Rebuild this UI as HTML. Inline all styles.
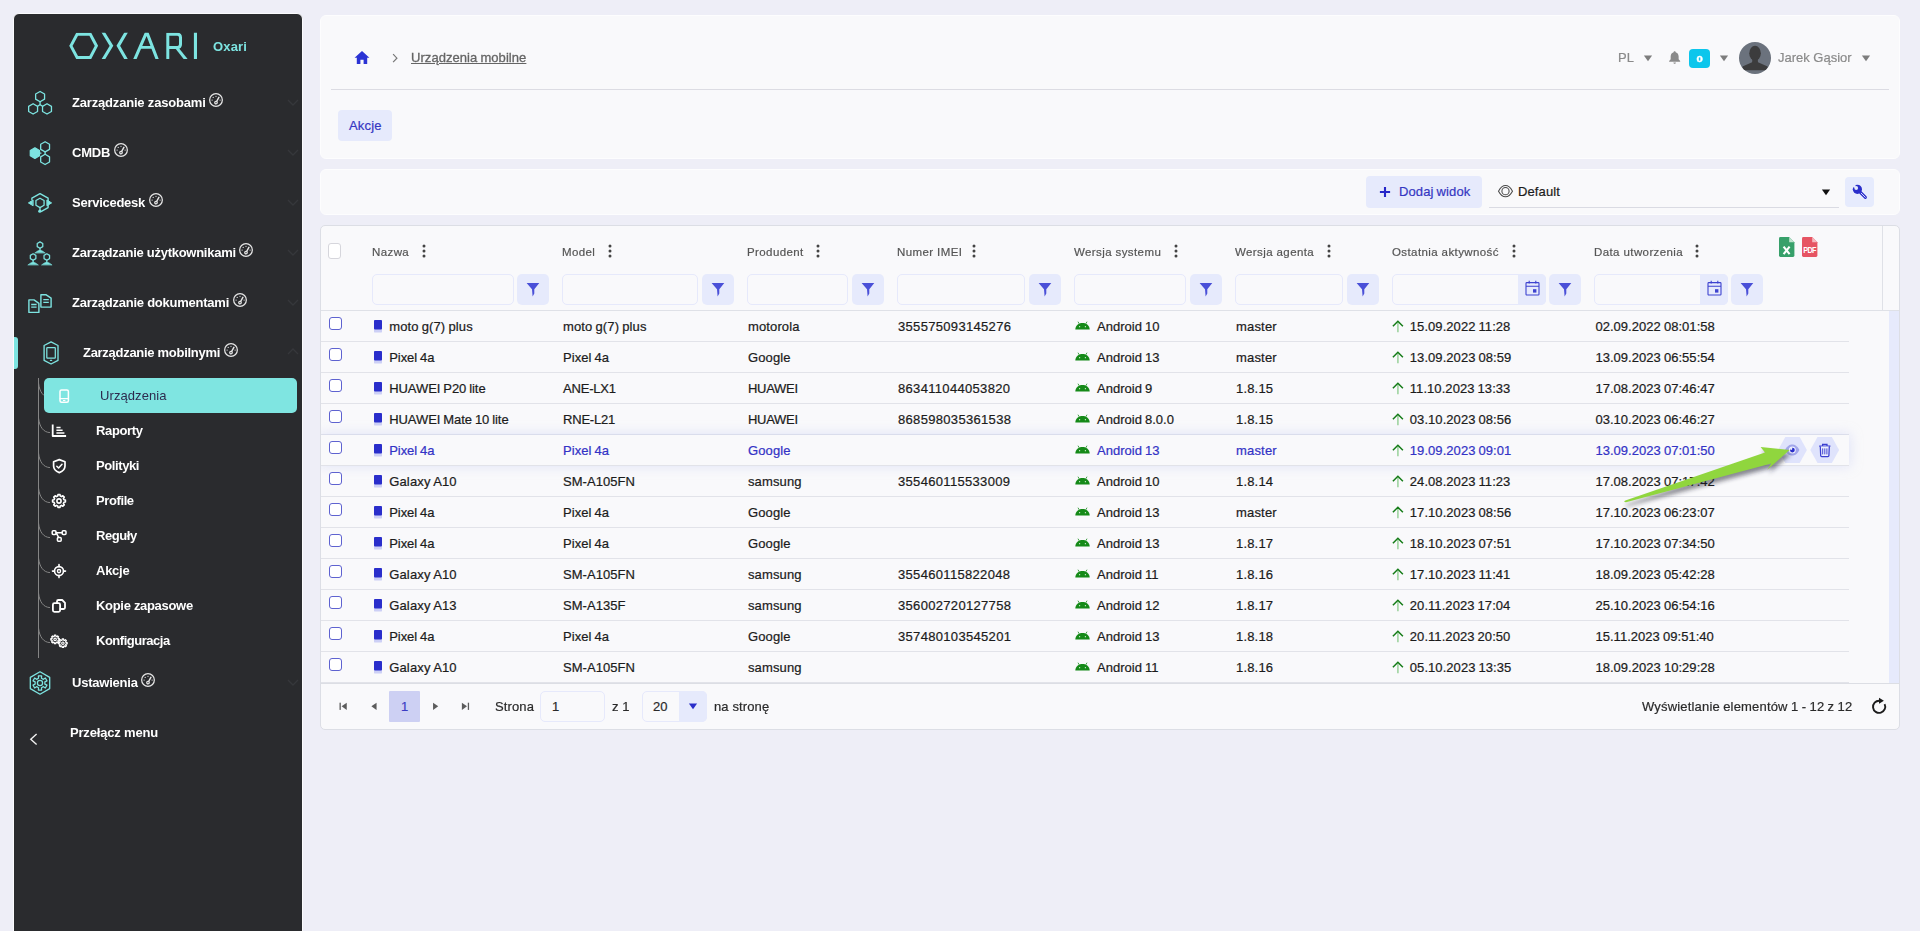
<!DOCTYPE html>
<html lang="pl">
<head>
<meta charset="utf-8">
<title>Urządzenia mobilne</title>
<style>
*{box-sizing:border-box;margin:0;padding:0}
html,body{width:1920px;height:931px;overflow:hidden}
body{background:#eeeef7;font-family:"Liberation Sans",sans-serif;font-size:13.5px;color:#1c1c1c;position:relative}
div,span,svg{position:absolute}
span{margin-top:1px}
svg{overflow:visible}
#side{left:13px;top:13px;width:290px;height:930px;background:#2a2b2e;border-radius:6px 6px 0 0;border:1px solid #fbfbfd}
.brand{left:213px;top:38px;font-weight:bold;font-size:13px;line-height:16px;color:#7de4e1;letter-spacing:0.15px}
.mt,.st,.brand,.hd,.g,.gs{will-change:transform}
.mt{font-weight:bold;font-size:13px;line-height:16px;color:#fff;letter-spacing:-0.3px;white-space:nowrap}
.st{font-weight:bold;font-size:13px;line-height:16px;color:#fff;letter-spacing:-0.38px;white-space:nowrap}
.panel{background:#f9f9fb;border-radius:6px;border:1px solid #fdfdfe}
.btn{background:#e6eafc;border-radius:4px}
.bt{color:#3537c2;font-size:13px;line-height:16px;letter-spacing:0.2px;white-space:nowrap;-webkit-text-stroke:0.2px currentColor}
.hd{font-size:11.5px;line-height:16px;color:#555;letter-spacing:0.4px;white-space:nowrap;margin-top:0;-webkit-text-stroke:0.2px currentColor}
.fi{height:31px;border:1px solid #e6e9fb;border-radius:5px;background:#f9f9fb}
.fb{height:31px;width:32px;background:#e6eafc;border-radius:5px}
.cal{height:31px;width:28px;background:#e6eafc;border-radius:0 5px 5px 0}
.rl{left:321px;width:1528px;height:1px;background:#e2e3e9}
.c{font-size:13px;line-height:16px;white-space:nowrap;color:#1c1c1c;word-spacing:-0.6px;-webkit-text-stroke:0.22px currentColor}
.s{color:#3333c6}
.cb{width:13px;height:13px;border:1px solid #5e62d0;border-radius:3px;background:#fff}
.g{color:#8a8a8a;font-size:13px;line-height:16px;letter-spacing:0;white-space:nowrap;-webkit-text-stroke:0.2px currentColor}
.pt{font-size:13px;line-height:16px;letter-spacing:0.12px;white-space:nowrap;color:#2a2a2a;-webkit-text-stroke:0.2px currentColor}
</style>
</head>
<body>
<div id="side"></div>
<svg style="left:60px;top:25px" width="150" height="40" viewBox="60 25 150 40" fill="none" stroke="#7de4e1" stroke-width="3.1"><defs><clipPath id="lg"><rect x="60" y="32.8" width="150" height="26.1"/></clipPath></defs><g clip-path="url(#lg)">
<polygon points="70.9,45.85 77.1,34.3 90.3,34.3 96.4,45.85 90.3,57.4 77.1,57.4" stroke-width="3"/>
<path d="M102.3,30.8 L111.5,45.85 L102.3,60.9 M127.1,30.8 L118.3,45.85 L127.1,60.9" stroke-linejoin="miter" stroke-miterlimit="10"/>
<path d="M134.1,60.9 L146.7,32.0 L157.8,60.9" stroke-linejoin="miter" stroke-miterlimit="1.6"/><path d="M140.0,47.4 L152.6,47.4" stroke-width="2.7"/>
<path d="M167.8,60 L167.8,34.35 L177.4,34.35 Q180.5,34.35 180.5,37.6 L180.5,44.2 Q180.5,47.4 177.4,47.4 L167.8,47.4" stroke-width="3"/><path d="M176.4,47.4 L186.4,60.0" stroke-width="3.1"/>
<path d="M195.45,30 L195.45,61"/>
</g></svg>
<span class="brand">Oxari</span>
<span class="mt" style="left:72.1px;top:94px;letter-spacing:-0.182px">Zarządzanie zasobami<svg class="gz" width="14" height="14" viewBox="0 0 14 14" fill="none" stroke="#e6e6e6" stroke-width="1.25" style="position:relative;display:inline-block;vertical-align:top;margin-left:3.7px;top:-2px"><circle cx="7" cy="7" r="6.35"/><path d="M7.3,9.0 L9.9,4.4" stroke-width="1.5" stroke-linecap="round"/><circle cx="7.0" cy="9.6" r="1.3" stroke-width="1.2" fill="#2a2b2e"/><g fill="#e6e6e6" stroke="none"><circle cx="7" cy="3.3" r="0.6"/><circle cx="4.2" cy="4.4" r="0.6"/><circle cx="3.1" cy="7.1" r="0.6"/><circle cx="11.1" cy="7.1" r="0.6"/></g></svg></span>
<svg style="left:287px;top:99px" width="12" height="7" viewBox="0 0 12 7" fill="none" stroke="#36373b" stroke-width="1.4"><path d="M1,1 L6,6 L11,1"/></svg>
<span class="mt" style="left:72.4px;top:144px;letter-spacing:-0.233px">CMDB<svg class="gz" width="14" height="14" viewBox="0 0 14 14" fill="none" stroke="#e6e6e6" stroke-width="1.25" style="position:relative;display:inline-block;vertical-align:top;margin-left:3.7px;top:-2px"><circle cx="7" cy="7" r="6.35"/><path d="M7.3,9.0 L9.9,4.4" stroke-width="1.5" stroke-linecap="round"/><circle cx="7.0" cy="9.6" r="1.3" stroke-width="1.2" fill="#2a2b2e"/><g fill="#e6e6e6" stroke="none"><circle cx="7" cy="3.3" r="0.6"/><circle cx="4.2" cy="4.4" r="0.6"/><circle cx="3.1" cy="7.1" r="0.6"/><circle cx="11.1" cy="7.1" r="0.6"/></g></svg></span>
<svg style="left:287px;top:149px" width="12" height="7" viewBox="0 0 12 7" fill="none" stroke="#36373b" stroke-width="1.4"><path d="M1,1 L6,6 L11,1"/></svg>
<span class="mt" style="left:72.4px;top:194px;letter-spacing:-0.260px">Servicedesk<svg class="gz" width="14" height="14" viewBox="0 0 14 14" fill="none" stroke="#e6e6e6" stroke-width="1.25" style="position:relative;display:inline-block;vertical-align:top;margin-left:3.7px;top:-2px"><circle cx="7" cy="7" r="6.35"/><path d="M7.3,9.0 L9.9,4.4" stroke-width="1.5" stroke-linecap="round"/><circle cx="7.0" cy="9.6" r="1.3" stroke-width="1.2" fill="#2a2b2e"/><g fill="#e6e6e6" stroke="none"><circle cx="7" cy="3.3" r="0.6"/><circle cx="4.2" cy="4.4" r="0.6"/><circle cx="3.1" cy="7.1" r="0.6"/><circle cx="11.1" cy="7.1" r="0.6"/></g></svg></span>
<svg style="left:287px;top:199px" width="12" height="7" viewBox="0 0 12 7" fill="none" stroke="#36373b" stroke-width="1.4"><path d="M1,1 L6,6 L11,1"/></svg>
<span class="mt" style="left:72.4px;top:244px;letter-spacing:-0.269px">Zarządzanie użytkownikami<svg class="gz" width="14" height="14" viewBox="0 0 14 14" fill="none" stroke="#e6e6e6" stroke-width="1.25" style="position:relative;display:inline-block;vertical-align:top;margin-left:3.7px;top:-2px"><circle cx="7" cy="7" r="6.35"/><path d="M7.3,9.0 L9.9,4.4" stroke-width="1.5" stroke-linecap="round"/><circle cx="7.0" cy="9.6" r="1.3" stroke-width="1.2" fill="#2a2b2e"/><g fill="#e6e6e6" stroke="none"><circle cx="7" cy="3.3" r="0.6"/><circle cx="4.2" cy="4.4" r="0.6"/><circle cx="3.1" cy="7.1" r="0.6"/><circle cx="11.1" cy="7.1" r="0.6"/></g></svg></span>
<svg style="left:287px;top:249px" width="12" height="7" viewBox="0 0 12 7" fill="none" stroke="#36373b" stroke-width="1.4"><path d="M1,1 L6,6 L11,1"/></svg>
<span class="mt" style="left:72.4px;top:294px;letter-spacing:-0.239px">Zarządzanie dokumentami<svg class="gz" width="14" height="14" viewBox="0 0 14 14" fill="none" stroke="#e6e6e6" stroke-width="1.25" style="position:relative;display:inline-block;vertical-align:top;margin-left:3.7px;top:-2px"><circle cx="7" cy="7" r="6.35"/><path d="M7.3,9.0 L9.9,4.4" stroke-width="1.5" stroke-linecap="round"/><circle cx="7.0" cy="9.6" r="1.3" stroke-width="1.2" fill="#2a2b2e"/><g fill="#e6e6e6" stroke="none"><circle cx="7" cy="3.3" r="0.6"/><circle cx="4.2" cy="4.4" r="0.6"/><circle cx="3.1" cy="7.1" r="0.6"/><circle cx="11.1" cy="7.1" r="0.6"/></g></svg></span>
<svg style="left:287px;top:299px" width="12" height="7" viewBox="0 0 12 7" fill="none" stroke="#36373b" stroke-width="1.4"><path d="M1,1 L6,6 L11,1"/></svg>
<span class="mt" style="left:82.7px;top:344px;letter-spacing:-0.287px">Zarządzanie mobilnymi<svg class="gz" width="14" height="14" viewBox="0 0 14 14" fill="none" stroke="#e6e6e6" stroke-width="1.25" style="position:relative;display:inline-block;vertical-align:top;margin-left:3.7px;top:-2px"><circle cx="7" cy="7" r="6.35"/><path d="M7.3,9.0 L9.9,4.4" stroke-width="1.5" stroke-linecap="round"/><circle cx="7.0" cy="9.6" r="1.3" stroke-width="1.2" fill="#2a2b2e"/><g fill="#e6e6e6" stroke="none"><circle cx="7" cy="3.3" r="0.6"/><circle cx="4.2" cy="4.4" r="0.6"/><circle cx="3.1" cy="7.1" r="0.6"/><circle cx="11.1" cy="7.1" r="0.6"/></g></svg></span>
<svg style="left:287px;top:348px" width="12" height="7" viewBox="0 0 12 7" fill="none" stroke="#36373b" stroke-width="1.4"><path d="M1,6 L6,1 L11,6"/></svg>
<span class="mt" style="left:72.4px;top:674px;letter-spacing:-0.217px">Ustawienia<svg class="gz" width="14" height="14" viewBox="0 0 14 14" fill="none" stroke="#e6e6e6" stroke-width="1.25" style="position:relative;display:inline-block;vertical-align:top;margin-left:3.7px;top:-2px"><circle cx="7" cy="7" r="6.35"/><path d="M7.3,9.0 L9.9,4.4" stroke-width="1.5" stroke-linecap="round"/><circle cx="7.0" cy="9.6" r="1.3" stroke-width="1.2" fill="#2a2b2e"/><g fill="#e6e6e6" stroke="none"><circle cx="7" cy="3.3" r="0.6"/><circle cx="4.2" cy="4.4" r="0.6"/><circle cx="3.1" cy="7.1" r="0.6"/><circle cx="11.1" cy="7.1" r="0.6"/></g></svg></span>
<svg style="left:287px;top:679px" width="12" height="7" viewBox="0 0 12 7" fill="none" stroke="#36373b" stroke-width="1.4"><path d="M1,1 L6,6 L11,1"/></svg>
<span class="mt" style="left:70.1px;top:724px;letter-spacing:-0.179px">Przełącz menu</span>
<svg style="left:29px;top:732px" width="10" height="15" viewBox="29 732 10 15" fill="none" stroke="#f0f0f0" stroke-width="1.4"><path d="M36.6,734.0 L30.8,739.2 L36.6,744.4"/></svg>
<div style="left:14px;top:337px;width:4px;height:32px;background:#7de4e1;border-radius:0 3px 3px 0"></div>
<svg style="left:0;top:0" width="80" height="720" viewBox="0 0 80 720" fill="none" stroke="#7de4e1" stroke-width="1.3" stroke-linejoin="round" stroke-linecap="round">
<polygon points="44.56,99.17 40.10,101.75 35.64,99.17 35.64,94.02 40.10,91.45 44.56,94.02"/>
<polygon points="37.56,111.48 33.10,114.05 28.64,111.48 28.64,106.33 33.10,103.75 37.56,106.33"/>
<polygon points="51.46,111.48 47.00,114.05 42.54,111.48 42.54,106.33 47.00,103.75 51.46,106.33"/>
<path d="M40.05,101.8 L40.05,104.6 M40.05,104.6 L37.6,106.2 M40.05,104.6 L42.5,106.2"/>
<polygon points="39.49,155.75 34.90,158.40 30.31,155.75 30.31,150.45 34.90,147.80 39.49,150.45" fill="#7de4e1"/>
<polygon points="49.52,149.35 45.10,151.90 40.68,149.35 40.68,144.25 45.10,141.70 49.52,144.25"/>
<polygon points="49.52,161.95 45.10,164.50 40.68,161.95 40.68,156.85 45.10,154.30 49.52,156.85"/>
<path d="M45.1,151.9 L45.1,154.3 M40.2,153.1 L41.0,153.1"/>
<polygon points="44.07,205.25 40.00,207.60 35.93,205.25 35.93,200.55 40.00,198.20 44.07,200.55" stroke-width="1.3"/>
<path d="M31.9,199.4 L31.9,198.2 L40.0,193.6 L48.1,198.2 L48.1,207.6 L41.4,211.4" stroke-width="1.4"/>
<path d="M40.0,207.8 L40.0,210.4" stroke-width="1.3"/>
<path d="M32.8,200.2 L28.4,202.9 L32.8,205.6 Z M47.2,200.2 L51.6,202.9 L47.2,205.6 Z" fill="#7de4e1" stroke-width="1"/>
<circle cx="39.8" cy="211.2" r="1.6" fill="#7de4e1" stroke="none"/>
<polygon points="42.77,246.65 40.00,248.25 37.23,246.65 37.23,243.45 40.00,241.85 42.77,243.45" stroke-width="1.25"/>
<path d="M35.00,252.80 Q37.80,250.45 40.00,250.05 Q42.20,250.45 45.00,252.80 Z" fill="#7de4e1" stroke-width="0.6"/>
<path d="M40.00,248.45 L40.00,250.45" stroke-width="1.2"/>
<polygon points="35.87,258.60 33.10,260.20 30.33,258.60 30.33,255.40 33.10,253.80 35.87,255.40" stroke-width="1.25"/>
<path d="M28.10,264.75 Q30.90,262.40 33.10,262.00 Q35.30,262.40 38.10,264.75 Z" fill="#7de4e1" stroke-width="0.6"/>
<path d="M33.10,260.40 L33.10,262.40" stroke-width="1.2"/>
<polygon points="49.57,258.60 46.80,260.20 44.03,258.60 44.03,255.40 46.80,253.80 49.57,255.40" stroke-width="1.25"/>
<path d="M41.80,264.75 Q44.60,262.40 46.80,262.00 Q49.00,262.40 51.80,264.75 Z" fill="#7de4e1" stroke-width="0.6"/>
<path d="M46.80,260.40 L46.80,262.40" stroke-width="1.2"/>
<path d="M28.9,299.9 L34.0,299.9 L38.9,303.3 L38.9,312.4 L28.9,312.4 Z" stroke-width="1.4"/>
<path d="M31.2,304.5 L36.6,304.5 M31.2,307.2 L36.6,307.2" stroke-width="1.3" stroke-linecap="butt"/>
<path d="M40.9,294.8 L46.2,294.8 L51.1,298.2 L51.1,307.1 L40.9,307.1 Z" stroke-width="1.4"/>
<path d="M43.3,299.7 L48.8,299.7 M43.3,302.4 L48.8,302.4" stroke-width="1.3" stroke-linecap="butt"/>
<path d="M51.05,341.9 L58.0,345.5 L58.0,360.4 L51.05,364.0 L44.1,360.4 L44.1,345.5 Z" stroke-width="1.35"/>
<rect x="46.8" y="347.5" width="8.5" height="10.5" rx="0.6" stroke-width="1.25"/>
<path d="M50.4,360.3 L51.7,360.3" stroke-width="1.2"/>
<polygon points="49.70,688.60 40.00,694.20 30.30,688.60 30.30,677.40 40.00,671.80 49.70,677.40" stroke-width="1.3"/>
<polygon points="38.36,675.89 41.64,675.89 41.46,678.22 43.41,679.34 45.34,678.02 46.98,680.87 44.87,681.88 44.87,684.12 46.98,685.13 45.34,687.98 43.41,686.66 41.46,687.78 41.64,690.11 38.36,690.11 38.54,687.78 36.59,686.66 34.66,687.98 33.02,685.13 35.13,684.12 35.13,681.88 33.02,680.87 34.66,678.02 36.59,679.34 38.54,678.22" stroke-width="1.25"/>
<circle cx="40.0" cy="683.0" r="2.6" stroke-width="1.25"/>
</svg>
<svg style="left:0;top:0" width="320" height="720" viewBox="0 0 320 720" fill="none" stroke="#858585" stroke-width="1">
<path d="M38.5,378 L38.5,658"/>
<path d="M38.5,383 C39.5,392.0 43.5,397.3 50,397.6"/>
<path d="M38.5,418 C39.5,427.0 43.5,432.3 50,432.6"/>
<path d="M38.5,453 C39.5,462.0 43.5,467.3 50,467.6"/>
<path d="M38.5,488 C39.5,497.0 43.5,502.3 50,502.6"/>
<path d="M38.5,523 C39.5,532.0 43.5,537.3 50,537.6"/>
<path d="M38.5,558 C39.5,567.0 43.5,572.3 50,572.6"/>
<path d="M38.5,593 C39.5,602.0 43.5,607.3 50,607.6"/>
<path d="M38.5,628 C39.5,637.0 43.5,642.3 50,642.6"/>
</svg>
<div style="left:44px;top:378px;width:253px;height:34.6px;background:#7fe5e1;border-radius:5px"></div>
<span class="st" style="left:100.4px;top:387px;color:#2d2b4e;font-weight:normal;letter-spacing:0.083px">Urządzenia</span>
<span class="st" style="left:95.6px;top:422px;letter-spacing:-0.358px">Raporty</span>
<span class="st" style="left:95.6px;top:457px;letter-spacing:-0.400px">Polityki</span>
<span class="st" style="left:95.6px;top:492px;letter-spacing:-0.392px">Profile</span>
<span class="st" style="left:95.6px;top:527px;letter-spacing:-0.440px">Reguły</span>
<span class="st" style="left:95.6px;top:562px;letter-spacing:-0.250px">Akcje</span>
<span class="st" style="left:95.6px;top:597px;letter-spacing:-0.308px">Kopie zapasowe</span>
<span class="st" style="left:95.6px;top:632px;letter-spacing:-0.486px">Konfiguracja</span>
<svg style="left:0;top:0" width="120" height="720" viewBox="0 0 120 720" fill="none" stroke="#fff" stroke-width="1.7" stroke-linecap="round" stroke-linejoin="round">
<rect x="60.0" y="390.0" width="8.4" height="12.2" rx="1.5" stroke-width="1.5"/><path d="M60.2,398.7 L68.2,398.7" stroke-width="1.2"/><path d="M63.4,400.5 L65.0,400.5" stroke-width="1.0"/>
<path d="M52.7,425.3 L52.7,436.0 L65.2,436.0" stroke-width="1.8" stroke-linecap="square"/><path d="M56.4,427.4 L60.6,427.4 M56.4,430.2 L62.6,430.2 M56.4,433.0 L64.4,433.0" stroke-width="1.5" stroke-linecap="butt"/>
<path d="M59.3,459.6 L65.0,461.8 L65.0,466 Q65.0,470.6 59.3,472.6 Q53.6,470.6 53.6,466 L53.6,461.8 Z" stroke-width="1.7"/><path d="M56.8,466.2 L58.6,468 L62.0,464.2" stroke-width="1.5"/>
<polygon points="57.98,494.58 60.02,494.58 60.28,496.06 61.59,496.61 62.82,495.74 64.26,497.18 63.39,498.41 63.94,499.72 65.42,499.98 65.42,502.02 63.94,502.28 63.39,503.59 64.26,504.82 62.82,506.26 61.59,505.39 60.28,505.94 60.02,507.42 57.98,507.42 57.72,505.94 56.41,505.39 55.18,506.26 53.74,504.82 54.61,503.59 54.06,502.28 52.58,502.02 52.58,499.98 54.06,499.72 54.61,498.41 53.74,497.18 55.18,495.74 56.41,496.61 57.72,496.06" stroke-width="1.6"/>
<circle cx="59.0" cy="501.0" r="2.1" stroke-width="1.6"/>
<rect x="52.2" y="530.8" width="3.8" height="3.8" rx="1" stroke-width="1.5"/><rect x="62.2" y="530.8" width="3.8" height="3.8" rx="1" stroke-width="1.5"/><rect x="57.4" y="537.4" width="3.8" height="3.8" rx="1" stroke-width="1.5"/><path d="M56.0,532.7 L62.2,532.7 M56.6,533.6 L58.6,537.4" stroke-width="1.5"/>
<circle cx="59.0" cy="571.1" r="4.5" stroke-width="1.6"/><circle cx="59.0" cy="571.1" r="1.6" stroke-width="1.4"/><path d="M59,564.6 L59,566.6 M59,575.6 L59,577.6 M52.5,571.1 L54.5,571.1 M63.5,571.1 L65.5,571.1" stroke-width="1.6"/>
<rect x="52.9" y="603.2" width="7.2" height="8.6" rx="1.5" stroke-width="1.8"/><path d="M57.0,603.0 L57.0,601.4 Q57.0,600.0 58.4,600.0 L62.2,600.0 L65.0,602.8 L65.0,607.6 Q65.0,609.0 63.6,609.0 L60.4,609.0" stroke-width="1.8"/>
<polygon points="54.43,635.15 55.77,635.15 55.90,636.30 56.72,636.64 57.63,635.92 58.58,636.87 57.86,637.78 58.20,638.60 59.35,638.73 59.35,640.07 58.20,640.20 57.86,641.02 58.58,641.93 57.63,642.88 56.72,642.16 55.90,642.50 55.77,643.65 54.43,643.65 54.30,642.50 53.48,642.16 52.57,642.88 51.62,641.93 52.34,641.02 52.00,640.20 50.85,640.07 50.85,638.73 52.00,638.60 52.34,637.78 51.62,636.87 52.57,635.92 53.48,636.64 54.30,636.30" stroke-width="1.3"/>
<circle cx="55.1" cy="639.4" r="1.2" stroke-width="1.2"/>
<polygon points="62.23,638.95 63.57,638.95 63.70,640.10 64.52,640.44 65.43,639.72 66.38,640.67 65.66,641.58 66.00,642.40 67.15,642.53 67.15,643.87 66.00,644.00 65.66,644.82 66.38,645.73 65.43,646.68 64.52,645.96 63.70,646.30 63.57,647.45 62.23,647.45 62.10,646.30 61.28,645.96 60.37,646.68 59.42,645.73 60.14,644.82 59.80,644.00 58.65,643.87 58.65,642.53 59.80,642.40 60.14,641.58 59.42,640.67 60.37,639.72 61.28,640.44 62.10,640.10" stroke-width="1.3"/>
<circle cx="62.9" cy="643.2" r="1.2" stroke-width="1.2"/>
</svg>
<div class="panel" style="left:320px;top:15px;width:1580px;height:144px"></div>
<svg style="left:353px;top:49px" width="18" height="17" viewBox="0 0 18 17"><path d="M9,1.9 L1.6,8.8 L3.8,8.8 L3.8,15.0 L7.4,15.0 L7.4,10.8 L10.6,10.8 L10.6,15.0 L14.2,15.0 L14.2,8.8 L16.4,8.8 Z" fill="#2b33d4"/></svg>
<svg style="left:391px;top:52px" width="8" height="11" viewBox="0 0 8 11" fill="none" stroke="#777" stroke-width="1.2"><path d="M2.1,2.2 L5.9,6.2 L2.1,10.2"/></svg>
<span class="gs" style="left:411px;top:49px;font-size:13px;line-height:16px;color:#656565;letter-spacing:0.06px;word-spacing:-0.6px;white-space:nowrap;text-decoration:underline;-webkit-text-stroke:0.3px #656565">Urządzenia mobilne</span>
<div style="left:331px;top:89px;width:1558px;height:1px;background:#dcdce3"></div>
<div class="btn" style="left:338px;top:110px;width:54px;height:31px"></div>
<span class="bt" style="left:349px;top:117px">Akcje</span>
<span class="g" style="left:1618px;top:49px">PL</span>
<svg style="left:1643px;top:55px" width="10" height="7" viewBox="0 0 10 7"><path d="M0.9,0.5 L9.1,0.5 L5,6.3 Z" fill="#7d7d7d"/></svg>
<svg style="left:1668px;top:49.6px" width="13.3" height="15.2" viewBox="0 0 14 16"><path d="M7,1.2 C7.7,1.2 8.1,1.7 8.1,2.3 C10.2,2.9 11.2,4.7 11.2,6.9 L11.2,9.8 L12.8,11.6 L12.8,12.3 L1.2,12.3 L1.2,11.6 L2.8,9.8 L2.8,6.9 C2.8,4.7 3.8,2.9 5.9,2.3 C5.9,1.7 6.3,1.2 7,1.2 Z M5.7,13.2 L8.3,13.2 C8.3,14 7.7,14.6 7,14.6 C6.3,14.6 5.7,14 5.7,13.2 Z" fill="#8a8a8a"/></svg>
<div style="left:1689px;top:49px;width:21px;height:19px;background:#0cc6ec;border-radius:4px"></div>
<span style="left:1697.4px;top:50.9px;font-size:9.5px;line-height:14px;font-weight:bold;color:#fff;transform:scaleX(1.2);-webkit-text-stroke:0.35px #fff">0</span>
<svg style="left:1719px;top:55px" width="10" height="7" viewBox="0 0 10 7"><path d="M0.9,0.5 L9.1,0.5 L5,6.3 Z" fill="#7d7d7d"/></svg>
<svg style="left:1739px;top:42px" width="32" height="32" viewBox="0 0 32 32"><defs><clipPath id="av"><circle cx="16" cy="16" r="16"/></clipPath></defs><circle cx="16" cy="16" r="16" fill="#6b727d"/><g clip-path="url(#av)" fill="#3c3c3d"><ellipse cx="16.05" cy="11.2" rx="5.8" ry="7.5"/><path d="M13.4,17 L18.7,17 L19.0,20.3 L28.6,24.6 L28.9,28.2 L3.2,28.2 L3.5,24.6 L13.1,20.3 Z"/></g></svg>
<span class="g" style="left:1778px;top:49px;letter-spacing:-0.01px">Jarek Gąsior</span>
<svg style="left:1861px;top:55px" width="10" height="7" viewBox="0 0 10 7"><path d="M0.9,0.5 L9.1,0.5 L5,6.3 Z" fill="#7d7d7d"/></svg>
<div class="panel" style="left:320px;top:169px;width:1580px;height:46px"></div>
<div class="btn" style="left:1366px;top:176px;width:116px;height:32px"></div>
<svg style="left:1379px;top:186px" width="12" height="12" viewBox="0 0 12 12" stroke="#2626c8" stroke-width="2.1"><path d="M6,0.9 L6,11.1 M0.9,6 L11.1,6"/></svg>
<span class="bt" style="left:1399px;top:183px;letter-spacing:0.12px;word-spacing:-0.7px">Dodaj widok</span>
<div style="left:1489px;top:207px;width:350px;height:1px;background:#dadbe3"></div>
<svg style="left:1498px;top:184.8px" width="15" height="12.4" viewBox="0 0 15 12.4" fill="none" stroke="#4a4a4a" stroke-width="1.05"><path d="M0.5,6.2 C3,1.6 5.4,0.6 7.5,0.6 C9.6,0.6 12,1.6 14.5,6.2 C12,10.8 9.6,11.8 7.5,11.8 C5.4,11.8 3,10.8 0.5,6.2 Z"/><circle cx="7.5" cy="6.2" r="3.6"/></svg>
<span class="pt" style="left:1518px;top:183px;color:#1c1c1c">Default</span>
<svg style="left:1821px;top:189px" width="10" height="7" viewBox="0 0 10 7"><path d="M0.9,0.5 L9.1,0.5 L5,6.3 Z" fill="#111"/></svg>
<div class="btn" style="left:1845px;top:177px;width:29px;height:30px;background:#e6ebfd"></div>
<svg style="left:1850px;top:182px" width="20" height="20" viewBox="1850 182 20 20"><path d="M1860.4,192.4 L1865.4,197.4" stroke="#2a2ecb" stroke-width="3" stroke-linecap="round" fill="none"/><path d="M1861.0,193.0 L1865.3,197.3" stroke="#e6ebfd" stroke-width="0.9" stroke-linecap="round" fill="none"/><circle cx="1857.4" cy="189.3" r="4.6" fill="#2a2ecb"/><circle cx="1856.2" cy="188.0" r="1.9" fill="#e6ebfd"/><path d="M1856.0,186.0 L1853.6,183.6 L1851.8,185.6 L1854.2,188.0 Z" fill="#e6ebfd"/></svg>
<div class="panel" style="left:320px;top:225px;width:1580px;height:505px;border:1px solid #dcdee5;border-radius:5px"></div>
<div style="left:328px;top:243px;width:13px;height:16px;border:1px solid #d6d6dc;border-radius:3px;background:#fff"></div>
<span class="hd" style="left:372px;top:244px">Nazwa</span>
<svg style="left:421.5px;top:244.4px" width="4" height="14" viewBox="0 0 4 14" fill="#444"><circle cx="2" cy="2" r="1.5"/><circle cx="2" cy="7" r="1.5"/><circle cx="2" cy="12" r="1.5"/></svg>
<div class="fi" style="left:372px;top:274px;width:142px"></div>
<div class="fb" style="left:517px;top:274px"></div>
<svg style="left:526px;top:282px" width="14" height="15" viewBox="0 0 14 15"><path d="M0.6,0.9 L13.3,0.9 L8.3,7.2 L8.3,11.4 L6.6,14.4 L6.0,7.2 Z" fill="#4a50d8"/></svg>
<span class="hd" style="left:562px;top:244px">Model</span>
<svg style="left:607.5px;top:244.4px" width="4" height="14" viewBox="0 0 4 14" fill="#444"><circle cx="2" cy="2" r="1.5"/><circle cx="2" cy="7" r="1.5"/><circle cx="2" cy="12" r="1.5"/></svg>
<div class="fi" style="left:562px;top:274px;width:136px"></div>
<div class="fb" style="left:702px;top:274px"></div>
<svg style="left:711px;top:282px" width="14" height="15" viewBox="0 0 14 15"><path d="M0.6,0.9 L13.3,0.9 L8.3,7.2 L8.3,11.4 L6.6,14.4 L6.0,7.2 Z" fill="#4a50d8"/></svg>
<span class="hd" style="left:747px;top:244px">Produdent</span>
<svg style="left:815.5px;top:244.4px" width="4" height="14" viewBox="0 0 4 14" fill="#444"><circle cx="2" cy="2" r="1.5"/><circle cx="2" cy="7" r="1.5"/><circle cx="2" cy="12" r="1.5"/></svg>
<div class="fi" style="left:747px;top:274px;width:101px"></div>
<div class="fb" style="left:852px;top:274px"></div>
<svg style="left:861px;top:282px" width="14" height="15" viewBox="0 0 14 15"><path d="M0.6,0.9 L13.3,0.9 L8.3,7.2 L8.3,11.4 L6.6,14.4 L6.0,7.2 Z" fill="#4a50d8"/></svg>
<span class="hd" style="left:897px;top:244px">Numer IMEI</span>
<svg style="left:971.5px;top:244.4px" width="4" height="14" viewBox="0 0 4 14" fill="#444"><circle cx="2" cy="2" r="1.5"/><circle cx="2" cy="7" r="1.5"/><circle cx="2" cy="12" r="1.5"/></svg>
<div class="fi" style="left:897px;top:274px;width:128px"></div>
<div class="fb" style="left:1029px;top:274px"></div>
<svg style="left:1038px;top:282px" width="14" height="15" viewBox="0 0 14 15"><path d="M0.6,0.9 L13.3,0.9 L8.3,7.2 L8.3,11.4 L6.6,14.4 L6.0,7.2 Z" fill="#4a50d8"/></svg>
<span class="hd" style="left:1074px;top:244px">Wersja systemu</span>
<svg style="left:1173.5px;top:244.4px" width="4" height="14" viewBox="0 0 4 14" fill="#444"><circle cx="2" cy="2" r="1.5"/><circle cx="2" cy="7" r="1.5"/><circle cx="2" cy="12" r="1.5"/></svg>
<div class="fi" style="left:1074px;top:274px;width:112px"></div>
<div class="fb" style="left:1190px;top:274px"></div>
<svg style="left:1199px;top:282px" width="14" height="15" viewBox="0 0 14 15"><path d="M0.6,0.9 L13.3,0.9 L8.3,7.2 L8.3,11.4 L6.6,14.4 L6.0,7.2 Z" fill="#4a50d8"/></svg>
<span class="hd" style="left:1235px;top:244px">Wersja agenta</span>
<svg style="left:1326.5px;top:244.4px" width="4" height="14" viewBox="0 0 4 14" fill="#444"><circle cx="2" cy="2" r="1.5"/><circle cx="2" cy="7" r="1.5"/><circle cx="2" cy="12" r="1.5"/></svg>
<div class="fi" style="left:1235px;top:274px;width:108px"></div>
<div class="fb" style="left:1347px;top:274px"></div>
<svg style="left:1356px;top:282px" width="14" height="15" viewBox="0 0 14 15"><path d="M0.6,0.9 L13.3,0.9 L8.3,7.2 L8.3,11.4 L6.6,14.4 L6.0,7.2 Z" fill="#4a50d8"/></svg>
<span class="hd" style="left:1392px;top:244px">Ostatnia aktywność</span>
<svg style="left:1511.5px;top:244.4px" width="4" height="14" viewBox="0 0 4 14" fill="#444"><circle cx="2" cy="2" r="1.5"/><circle cx="2" cy="7" r="1.5"/><circle cx="2" cy="12" r="1.5"/></svg>
<div class="fi" style="left:1392px;top:274px;width:154px"></div>
<div class="cal" style="left:1518px;top:274px"></div>
<svg style="left:1524.6px;top:280.4px" width="15" height="16" viewBox="0 0 15 16" fill="none" stroke="#3d42cf" stroke-width="1.1"><rect x="1" y="2.6" width="13" height="12.4" rx="0.8"/><path d="M1,6.2 L14,6.2 M4.2,0.8 L4.2,3.6 M10.8,0.8 L10.8,3.6"/><rect x="8" y="9.2" width="3.4" height="3.4" fill="#3d42cf" stroke="none"/></svg>
<div class="fb" style="left:1549px;top:274px"></div>
<svg style="left:1558px;top:282px" width="14" height="15" viewBox="0 0 14 15"><path d="M0.6,0.9 L13.3,0.9 L8.3,7.2 L8.3,11.4 L6.6,14.4 L6.0,7.2 Z" fill="#4a50d8"/></svg>
<span class="hd" style="left:1594px;top:244px">Data utworzenia</span>
<svg style="left:1694.5px;top:244.4px" width="4" height="14" viewBox="0 0 4 14" fill="#444"><circle cx="2" cy="2" r="1.5"/><circle cx="2" cy="7" r="1.5"/><circle cx="2" cy="12" r="1.5"/></svg>
<div class="fi" style="left:1594px;top:274px;width:134px"></div>
<div class="cal" style="left:1700px;top:274px"></div>
<svg style="left:1706.6px;top:280.4px" width="15" height="16" viewBox="0 0 15 16" fill="none" stroke="#3d42cf" stroke-width="1.1"><rect x="1" y="2.6" width="13" height="12.4" rx="0.8"/><path d="M1,6.2 L14,6.2 M4.2,0.8 L4.2,3.6 M10.8,0.8 L10.8,3.6"/><rect x="8" y="9.2" width="3.4" height="3.4" fill="#3d42cf" stroke="none"/></svg>
<div class="fb" style="left:1731px;top:274px"></div>
<svg style="left:1740px;top:282px" width="14" height="15" viewBox="0 0 14 15"><path d="M0.6,0.9 L13.3,0.9 L8.3,7.2 L8.3,11.4 L6.6,14.4 L6.0,7.2 Z" fill="#4a50d8"/></svg>
<svg style="left:1779.4px;top:236.6px" width="15.4" height="20" viewBox="0 0 15.4 20"><path d="M1.4,0 L10.2,0 L15.4,5.2 L15.4,18.6 Q15.4,20 14,20 L1.4,20 Q0,20 0,18.6 L0,1.4 Q0,0 1.4,0 Z" fill="#37a06a"/><path d="M10.2,0 L10.2,5.2 L15.4,5.2 Z" fill="#bfe3cf"/><path d="M4.6,9.6 L10.6,17.2 M10.6,9.6 L4.6,17.2" stroke="#fff" stroke-width="2.1" fill="none"/></svg>
<svg style="left:1802.4px;top:236.6px" width="15.4" height="20" viewBox="0 0 15.4 20"><path d="M1.4,0 L10.2,0 L15.4,5.2 L15.4,18.6 Q15.4,20 14,20 L1.4,20 Q0,20 0,18.6 L0,1.4 Q0,0 1.4,0 Z" fill="#e65463"/><path d="M10.2,0 L10.2,5.2 L15.4,5.2 Z" fill="#f6b9bf"/><text x="7.6" y="15.6" font-family="Liberation Sans" font-weight="bold" font-size="8.2" fill="#fff" text-anchor="middle" letter-spacing="-0.7" textLength="12.6" lengthAdjust="spacingAndGlyphs">PDF</text></svg>
<div style="left:1882px;top:226px;width:1px;height:84px;background:#dfe1e7"></div>
<div style="left:321px;top:310px;width:1578px;height:1px;background:#dfe1e7"></div>
<div style="left:1889px;top:311px;width:10px;height:372px;background:#e6eafc"></div>
<div class="rl" style="top:341px"></div>
<div class="cb" style="left:329px;top:317px"></div>
<svg style="left:374px;top:320px" width="8" height="13" viewBox="0 0 8 13"><rect x="0" y="0" width="8" height="12.6" rx="1.2" fill="#cdd0f6"/><rect x="0" y="0" width="8" height="9.4" rx="1" fill="#2a2ecb"/></svg>
<svg style="left:1075px;top:320px" width="15" height="10" viewBox="0 0 15 10"><path d="M0.3,9.4 C0.5,5.6 3.4,3.0 7.5,3.0 C11.6,3.0 14.5,5.6 14.7,9.4 Z" fill="#158a18"/><path d="M4.2,3.8 L3.0,1.7 M10.8,3.8 L12.0,1.7" stroke="#158a18" stroke-width="0.8" fill="none"/><circle cx="4.6" cy="6.7" r="0.65" fill="#d8f0d8"/><circle cx="10.4" cy="6.7" r="0.65" fill="#d8f0d8"/></svg>
<svg style="left:1392px;top:320px" width="13" height="13" viewBox="0 0 13 13" fill="none"><path d="M5.9,12.2 L5.9,2.4" stroke="#a3d6a5" stroke-width="1.7"/><path d="M0.9,6.3 L5.9,1.2 L10.9,6.3" stroke="#157c18" stroke-width="1.5"/></svg>
<span class="c" style="left:389.2px;top:318px;letter-spacing:0.12px">moto g(7) plus</span>
<span class="c" style="left:563.0px;top:318px;letter-spacing:0.12px">moto g(7) plus</span>
<span class="c" style="left:748.0px;top:318px;letter-spacing:0.12px">motorola</span>
<span class="c" style="left:898.0px;top:318px;letter-spacing:0.32px">355575093145276</span>
<span class="c" style="left:1097.0px;top:318px;letter-spacing:0.02px">Android 10</span>
<span class="c" style="left:1236.0px;top:318px;letter-spacing:0.18px">master</span>
<span class="c" style="left:1409.8px;top:318px;letter-spacing:0.06px">15.09.2022 11:28</span>
<span class="c" style="left:1595.4px;top:318px;letter-spacing:0.04px">02.09.2022 08:01:58</span>
<div class="rl" style="top:372px"></div>
<div class="cb" style="left:329px;top:348px"></div>
<svg style="left:374px;top:351px" width="8" height="13" viewBox="0 0 8 13"><rect x="0" y="0" width="8" height="12.6" rx="1.2" fill="#cdd0f6"/><rect x="0" y="0" width="8" height="9.4" rx="1" fill="#2a2ecb"/></svg>
<svg style="left:1075px;top:351px" width="15" height="10" viewBox="0 0 15 10"><path d="M0.3,9.4 C0.5,5.6 3.4,3.0 7.5,3.0 C11.6,3.0 14.5,5.6 14.7,9.4 Z" fill="#158a18"/><path d="M4.2,3.8 L3.0,1.7 M10.8,3.8 L12.0,1.7" stroke="#158a18" stroke-width="0.8" fill="none"/><circle cx="4.6" cy="6.7" r="0.65" fill="#d8f0d8"/><circle cx="10.4" cy="6.7" r="0.65" fill="#d8f0d8"/></svg>
<svg style="left:1392px;top:351px" width="13" height="13" viewBox="0 0 13 13" fill="none"><path d="M5.9,12.2 L5.9,2.4" stroke="#a3d6a5" stroke-width="1.7"/><path d="M0.9,6.3 L5.9,1.2 L10.9,6.3" stroke="#157c18" stroke-width="1.5"/></svg>
<span class="c" style="left:389.2px;top:349px;letter-spacing:-0.06px">Pixel 4a</span>
<span class="c" style="left:563.0px;top:349px;letter-spacing:0.04px">Pixel 4a</span>
<span class="c" style="left:748.0px;top:349px;letter-spacing:0.12px">Google</span>
<span class="c" style="left:1097.0px;top:349px;letter-spacing:0.02px">Android 13</span>
<span class="c" style="left:1236.0px;top:349px;letter-spacing:0.18px">master</span>
<span class="c" style="left:1409.8px;top:349px;letter-spacing:0.06px">13.09.2023 08:59</span>
<span class="c" style="left:1595.4px;top:349px;letter-spacing:0.04px">13.09.2023 06:55:54</span>
<div class="rl" style="top:403px"></div>
<div class="cb" style="left:329px;top:379px"></div>
<svg style="left:374px;top:382px" width="8" height="13" viewBox="0 0 8 13"><rect x="0" y="0" width="8" height="12.6" rx="1.2" fill="#cdd0f6"/><rect x="0" y="0" width="8" height="9.4" rx="1" fill="#2a2ecb"/></svg>
<svg style="left:1075px;top:382px" width="15" height="10" viewBox="0 0 15 10"><path d="M0.3,9.4 C0.5,5.6 3.4,3.0 7.5,3.0 C11.6,3.0 14.5,5.6 14.7,9.4 Z" fill="#158a18"/><path d="M4.2,3.8 L3.0,1.7 M10.8,3.8 L12.0,1.7" stroke="#158a18" stroke-width="0.8" fill="none"/><circle cx="4.6" cy="6.7" r="0.65" fill="#d8f0d8"/><circle cx="10.4" cy="6.7" r="0.65" fill="#d8f0d8"/></svg>
<svg style="left:1392px;top:382px" width="13" height="13" viewBox="0 0 13 13" fill="none"><path d="M5.9,12.2 L5.9,2.4" stroke="#a3d6a5" stroke-width="1.7"/><path d="M0.9,6.3 L5.9,1.2 L10.9,6.3" stroke="#157c18" stroke-width="1.5"/></svg>
<span class="c" style="left:389.2px;top:380px;letter-spacing:-0.06px">HUAWEI P20 lite</span>
<span class="c" style="left:563.0px;top:380px;letter-spacing:-0.20px">ANE-LX1</span>
<span class="c" style="left:748.0px;top:380px;letter-spacing:-0.30px">HUAWEI</span>
<span class="c" style="left:898.0px;top:380px;letter-spacing:0.32px">863411044053820</span>
<span class="c" style="left:1097.0px;top:380px;letter-spacing:0.02px">Android 9</span>
<span class="c" style="left:1236.0px;top:380px;letter-spacing:0.18px">1.8.15</span>
<span class="c" style="left:1409.8px;top:380px;letter-spacing:0.06px">11.10.2023 13:33</span>
<span class="c" style="left:1595.4px;top:380px;letter-spacing:0.04px">17.08.2023 07:46:47</span>
<div class="rl" style="top:434px"></div>
<div class="cb" style="left:329px;top:410px"></div>
<svg style="left:374px;top:413px" width="8" height="13" viewBox="0 0 8 13"><rect x="0" y="0" width="8" height="12.6" rx="1.2" fill="#cdd0f6"/><rect x="0" y="0" width="8" height="9.4" rx="1" fill="#2a2ecb"/></svg>
<svg style="left:1075px;top:413px" width="15" height="10" viewBox="0 0 15 10"><path d="M0.3,9.4 C0.5,5.6 3.4,3.0 7.5,3.0 C11.6,3.0 14.5,5.6 14.7,9.4 Z" fill="#158a18"/><path d="M4.2,3.8 L3.0,1.7 M10.8,3.8 L12.0,1.7" stroke="#158a18" stroke-width="0.8" fill="none"/><circle cx="4.6" cy="6.7" r="0.65" fill="#d8f0d8"/><circle cx="10.4" cy="6.7" r="0.65" fill="#d8f0d8"/></svg>
<svg style="left:1392px;top:413px" width="13" height="13" viewBox="0 0 13 13" fill="none"><path d="M5.9,12.2 L5.9,2.4" stroke="#a3d6a5" stroke-width="1.7"/><path d="M0.9,6.3 L5.9,1.2 L10.9,6.3" stroke="#157c18" stroke-width="1.5"/></svg>
<span class="c" style="left:389.2px;top:411px;letter-spacing:-0.06px">HUAWEI Mate 10 lite</span>
<span class="c" style="left:563.0px;top:411px;letter-spacing:-0.20px">RNE-L21</span>
<span class="c" style="left:748.0px;top:411px;letter-spacing:-0.30px">HUAWEI</span>
<span class="c" style="left:898.0px;top:411px;letter-spacing:0.32px">868598035361538</span>
<span class="c" style="left:1097.0px;top:411px;letter-spacing:0.02px">Android 8.0.0</span>
<span class="c" style="left:1236.0px;top:411px;letter-spacing:0.18px">1.8.15</span>
<span class="c" style="left:1409.8px;top:411px;letter-spacing:0.06px">03.10.2023 08:56</span>
<span class="c" style="left:1595.4px;top:411px;letter-spacing:0.04px">03.10.2023 06:46:27</span>
<div style="left:321px;top:311px;width:1568px;height:372px;overflow:hidden"><div style="left:-1px;top:124px;width:1529px;height:30px;background:#f9f9fb;box-shadow:0 0 12px 1px rgba(200,206,246,.5)"></div></div>
<div class="rl" style="top:465px"></div>
<div class="cb" style="left:329px;top:441px"></div>
<svg style="left:374px;top:444px" width="8" height="13" viewBox="0 0 8 13"><rect x="0" y="0" width="8" height="12.6" rx="1.2" fill="#cdd0f6"/><rect x="0" y="0" width="8" height="9.4" rx="1" fill="#2a2ecb"/></svg>
<svg style="left:1075px;top:444px" width="15" height="10" viewBox="0 0 15 10"><path d="M0.3,9.4 C0.5,5.6 3.4,3.0 7.5,3.0 C11.6,3.0 14.5,5.6 14.7,9.4 Z" fill="#158a18"/><path d="M4.2,3.8 L3.0,1.7 M10.8,3.8 L12.0,1.7" stroke="#158a18" stroke-width="0.8" fill="none"/><circle cx="4.6" cy="6.7" r="0.65" fill="#d8f0d8"/><circle cx="10.4" cy="6.7" r="0.65" fill="#d8f0d8"/></svg>
<svg style="left:1392px;top:444px" width="13" height="13" viewBox="0 0 13 13" fill="none"><path d="M5.9,12.2 L5.9,2.4" stroke="#a3d6a5" stroke-width="1.7"/><path d="M0.9,6.3 L5.9,1.2 L10.9,6.3" stroke="#157c18" stroke-width="1.5"/></svg>
<span class="c s" style="left:389.2px;top:442px;letter-spacing:-0.06px">Pixel 4a</span>
<span class="c s" style="left:563.0px;top:442px;letter-spacing:0.04px">Pixel 4a</span>
<span class="c s" style="left:748.0px;top:442px;letter-spacing:0.12px">Google</span>
<span class="c s" style="left:1097.0px;top:442px;letter-spacing:0.02px">Android 13</span>
<span class="c s" style="left:1236.0px;top:442px;letter-spacing:0.18px">master</span>
<span class="c s" style="left:1409.8px;top:442px;letter-spacing:0.06px">19.09.2023 09:01</span>
<span class="c s" style="left:1595.4px;top:442px;letter-spacing:0.04px">13.09.2023 07:01:50</span>
<div class="rl" style="top:496px"></div>
<div class="cb" style="left:329px;top:472px"></div>
<svg style="left:374px;top:475px" width="8" height="13" viewBox="0 0 8 13"><rect x="0" y="0" width="8" height="12.6" rx="1.2" fill="#cdd0f6"/><rect x="0" y="0" width="8" height="9.4" rx="1" fill="#2a2ecb"/></svg>
<svg style="left:1075px;top:475px" width="15" height="10" viewBox="0 0 15 10"><path d="M0.3,9.4 C0.5,5.6 3.4,3.0 7.5,3.0 C11.6,3.0 14.5,5.6 14.7,9.4 Z" fill="#158a18"/><path d="M4.2,3.8 L3.0,1.7 M10.8,3.8 L12.0,1.7" stroke="#158a18" stroke-width="0.8" fill="none"/><circle cx="4.6" cy="6.7" r="0.65" fill="#d8f0d8"/><circle cx="10.4" cy="6.7" r="0.65" fill="#d8f0d8"/></svg>
<svg style="left:1392px;top:475px" width="13" height="13" viewBox="0 0 13 13" fill="none"><path d="M5.9,12.2 L5.9,2.4" stroke="#a3d6a5" stroke-width="1.7"/><path d="M0.9,6.3 L5.9,1.2 L10.9,6.3" stroke="#157c18" stroke-width="1.5"/></svg>
<span class="c" style="left:389.2px;top:473px;letter-spacing:0.17px">Galaxy A10</span>
<span class="c" style="left:563.0px;top:473px;letter-spacing:0.04px">SM-A105FN</span>
<span class="c" style="left:748.0px;top:473px;letter-spacing:0.12px">samsung</span>
<span class="c" style="left:898.0px;top:473px;letter-spacing:0.32px">355460115533009</span>
<span class="c" style="left:1097.0px;top:473px;letter-spacing:0.02px">Android 10</span>
<span class="c" style="left:1236.0px;top:473px;letter-spacing:0.18px">1.8.14</span>
<span class="c" style="left:1409.8px;top:473px;letter-spacing:0.06px">24.08.2023 11:23</span>
<span class="c" style="left:1595.4px;top:473px;letter-spacing:0.04px">17.08.2023 07:17:42</span>
<div class="rl" style="top:527px"></div>
<div class="cb" style="left:329px;top:503px"></div>
<svg style="left:374px;top:506px" width="8" height="13" viewBox="0 0 8 13"><rect x="0" y="0" width="8" height="12.6" rx="1.2" fill="#cdd0f6"/><rect x="0" y="0" width="8" height="9.4" rx="1" fill="#2a2ecb"/></svg>
<svg style="left:1075px;top:506px" width="15" height="10" viewBox="0 0 15 10"><path d="M0.3,9.4 C0.5,5.6 3.4,3.0 7.5,3.0 C11.6,3.0 14.5,5.6 14.7,9.4 Z" fill="#158a18"/><path d="M4.2,3.8 L3.0,1.7 M10.8,3.8 L12.0,1.7" stroke="#158a18" stroke-width="0.8" fill="none"/><circle cx="4.6" cy="6.7" r="0.65" fill="#d8f0d8"/><circle cx="10.4" cy="6.7" r="0.65" fill="#d8f0d8"/></svg>
<svg style="left:1392px;top:506px" width="13" height="13" viewBox="0 0 13 13" fill="none"><path d="M5.9,12.2 L5.9,2.4" stroke="#a3d6a5" stroke-width="1.7"/><path d="M0.9,6.3 L5.9,1.2 L10.9,6.3" stroke="#157c18" stroke-width="1.5"/></svg>
<span class="c" style="left:389.2px;top:504px;letter-spacing:-0.06px">Pixel 4a</span>
<span class="c" style="left:563.0px;top:504px;letter-spacing:0.04px">Pixel 4a</span>
<span class="c" style="left:748.0px;top:504px;letter-spacing:0.12px">Google</span>
<span class="c" style="left:1097.0px;top:504px;letter-spacing:0.02px">Android 13</span>
<span class="c" style="left:1236.0px;top:504px;letter-spacing:0.18px">master</span>
<span class="c" style="left:1409.8px;top:504px;letter-spacing:0.06px">17.10.2023 08:56</span>
<span class="c" style="left:1595.4px;top:504px;letter-spacing:0.04px">17.10.2023 06:23:07</span>
<div class="rl" style="top:558px"></div>
<div class="cb" style="left:329px;top:534px"></div>
<svg style="left:374px;top:537px" width="8" height="13" viewBox="0 0 8 13"><rect x="0" y="0" width="8" height="12.6" rx="1.2" fill="#cdd0f6"/><rect x="0" y="0" width="8" height="9.4" rx="1" fill="#2a2ecb"/></svg>
<svg style="left:1075px;top:537px" width="15" height="10" viewBox="0 0 15 10"><path d="M0.3,9.4 C0.5,5.6 3.4,3.0 7.5,3.0 C11.6,3.0 14.5,5.6 14.7,9.4 Z" fill="#158a18"/><path d="M4.2,3.8 L3.0,1.7 M10.8,3.8 L12.0,1.7" stroke="#158a18" stroke-width="0.8" fill="none"/><circle cx="4.6" cy="6.7" r="0.65" fill="#d8f0d8"/><circle cx="10.4" cy="6.7" r="0.65" fill="#d8f0d8"/></svg>
<svg style="left:1392px;top:537px" width="13" height="13" viewBox="0 0 13 13" fill="none"><path d="M5.9,12.2 L5.9,2.4" stroke="#a3d6a5" stroke-width="1.7"/><path d="M0.9,6.3 L5.9,1.2 L10.9,6.3" stroke="#157c18" stroke-width="1.5"/></svg>
<span class="c" style="left:389.2px;top:535px;letter-spacing:-0.06px">Pixel 4a</span>
<span class="c" style="left:563.0px;top:535px;letter-spacing:0.04px">Pixel 4a</span>
<span class="c" style="left:748.0px;top:535px;letter-spacing:0.12px">Google</span>
<span class="c" style="left:1097.0px;top:535px;letter-spacing:0.02px">Android 13</span>
<span class="c" style="left:1236.0px;top:535px;letter-spacing:0.18px">1.8.17</span>
<span class="c" style="left:1409.8px;top:535px;letter-spacing:0.06px">18.10.2023 07:51</span>
<span class="c" style="left:1595.4px;top:535px;letter-spacing:0.04px">17.10.2023 07:34:50</span>
<div class="rl" style="top:589px"></div>
<div class="cb" style="left:329px;top:565px"></div>
<svg style="left:374px;top:568px" width="8" height="13" viewBox="0 0 8 13"><rect x="0" y="0" width="8" height="12.6" rx="1.2" fill="#cdd0f6"/><rect x="0" y="0" width="8" height="9.4" rx="1" fill="#2a2ecb"/></svg>
<svg style="left:1075px;top:568px" width="15" height="10" viewBox="0 0 15 10"><path d="M0.3,9.4 C0.5,5.6 3.4,3.0 7.5,3.0 C11.6,3.0 14.5,5.6 14.7,9.4 Z" fill="#158a18"/><path d="M4.2,3.8 L3.0,1.7 M10.8,3.8 L12.0,1.7" stroke="#158a18" stroke-width="0.8" fill="none"/><circle cx="4.6" cy="6.7" r="0.65" fill="#d8f0d8"/><circle cx="10.4" cy="6.7" r="0.65" fill="#d8f0d8"/></svg>
<svg style="left:1392px;top:568px" width="13" height="13" viewBox="0 0 13 13" fill="none"><path d="M5.9,12.2 L5.9,2.4" stroke="#a3d6a5" stroke-width="1.7"/><path d="M0.9,6.3 L5.9,1.2 L10.9,6.3" stroke="#157c18" stroke-width="1.5"/></svg>
<span class="c" style="left:389.2px;top:566px;letter-spacing:0.17px">Galaxy A10</span>
<span class="c" style="left:563.0px;top:566px;letter-spacing:0.04px">SM-A105FN</span>
<span class="c" style="left:748.0px;top:566px;letter-spacing:0.12px">samsung</span>
<span class="c" style="left:898.0px;top:566px;letter-spacing:0.32px">355460115822048</span>
<span class="c" style="left:1097.0px;top:566px;letter-spacing:0.02px">Android 11</span>
<span class="c" style="left:1236.0px;top:566px;letter-spacing:0.18px">1.8.16</span>
<span class="c" style="left:1409.8px;top:566px;letter-spacing:0.06px">17.10.2023 11:41</span>
<span class="c" style="left:1595.4px;top:566px;letter-spacing:0.04px">18.09.2023 05:42:28</span>
<div class="rl" style="top:620px"></div>
<div class="cb" style="left:329px;top:596px"></div>
<svg style="left:374px;top:599px" width="8" height="13" viewBox="0 0 8 13"><rect x="0" y="0" width="8" height="12.6" rx="1.2" fill="#cdd0f6"/><rect x="0" y="0" width="8" height="9.4" rx="1" fill="#2a2ecb"/></svg>
<svg style="left:1075px;top:599px" width="15" height="10" viewBox="0 0 15 10"><path d="M0.3,9.4 C0.5,5.6 3.4,3.0 7.5,3.0 C11.6,3.0 14.5,5.6 14.7,9.4 Z" fill="#158a18"/><path d="M4.2,3.8 L3.0,1.7 M10.8,3.8 L12.0,1.7" stroke="#158a18" stroke-width="0.8" fill="none"/><circle cx="4.6" cy="6.7" r="0.65" fill="#d8f0d8"/><circle cx="10.4" cy="6.7" r="0.65" fill="#d8f0d8"/></svg>
<svg style="left:1392px;top:599px" width="13" height="13" viewBox="0 0 13 13" fill="none"><path d="M5.9,12.2 L5.9,2.4" stroke="#a3d6a5" stroke-width="1.7"/><path d="M0.9,6.3 L5.9,1.2 L10.9,6.3" stroke="#157c18" stroke-width="1.5"/></svg>
<span class="c" style="left:389.2px;top:597px;letter-spacing:0.17px">Galaxy A13</span>
<span class="c" style="left:563.0px;top:597px;letter-spacing:0.04px">SM-A135F</span>
<span class="c" style="left:748.0px;top:597px;letter-spacing:0.12px">samsung</span>
<span class="c" style="left:898.0px;top:597px;letter-spacing:0.32px">356002720127758</span>
<span class="c" style="left:1097.0px;top:597px;letter-spacing:0.02px">Android 12</span>
<span class="c" style="left:1236.0px;top:597px;letter-spacing:0.18px">1.8.17</span>
<span class="c" style="left:1409.8px;top:597px;letter-spacing:0.06px">20.11.2023 17:04</span>
<span class="c" style="left:1595.4px;top:597px;letter-spacing:0.04px">25.10.2023 06:54:16</span>
<div class="rl" style="top:651px"></div>
<div class="cb" style="left:329px;top:627px"></div>
<svg style="left:374px;top:630px" width="8" height="13" viewBox="0 0 8 13"><rect x="0" y="0" width="8" height="12.6" rx="1.2" fill="#cdd0f6"/><rect x="0" y="0" width="8" height="9.4" rx="1" fill="#2a2ecb"/></svg>
<svg style="left:1075px;top:630px" width="15" height="10" viewBox="0 0 15 10"><path d="M0.3,9.4 C0.5,5.6 3.4,3.0 7.5,3.0 C11.6,3.0 14.5,5.6 14.7,9.4 Z" fill="#158a18"/><path d="M4.2,3.8 L3.0,1.7 M10.8,3.8 L12.0,1.7" stroke="#158a18" stroke-width="0.8" fill="none"/><circle cx="4.6" cy="6.7" r="0.65" fill="#d8f0d8"/><circle cx="10.4" cy="6.7" r="0.65" fill="#d8f0d8"/></svg>
<svg style="left:1392px;top:630px" width="13" height="13" viewBox="0 0 13 13" fill="none"><path d="M5.9,12.2 L5.9,2.4" stroke="#a3d6a5" stroke-width="1.7"/><path d="M0.9,6.3 L5.9,1.2 L10.9,6.3" stroke="#157c18" stroke-width="1.5"/></svg>
<span class="c" style="left:389.2px;top:628px;letter-spacing:-0.06px">Pixel 4a</span>
<span class="c" style="left:563.0px;top:628px;letter-spacing:0.04px">Pixel 4a</span>
<span class="c" style="left:748.0px;top:628px;letter-spacing:0.12px">Google</span>
<span class="c" style="left:898.0px;top:628px;letter-spacing:0.32px">357480103545201</span>
<span class="c" style="left:1097.0px;top:628px;letter-spacing:0.02px">Android 13</span>
<span class="c" style="left:1236.0px;top:628px;letter-spacing:0.18px">1.8.18</span>
<span class="c" style="left:1409.8px;top:628px;letter-spacing:0.06px">20.11.2023 20:50</span>
<span class="c" style="left:1595.4px;top:628px;letter-spacing:0.04px">15.11.2023 09:51:40</span>
<div class="rl" style="top:682px"></div>
<div class="cb" style="left:329px;top:658px"></div>
<svg style="left:374px;top:661px" width="8" height="13" viewBox="0 0 8 13"><rect x="0" y="0" width="8" height="12.6" rx="1.2" fill="#cdd0f6"/><rect x="0" y="0" width="8" height="9.4" rx="1" fill="#2a2ecb"/></svg>
<svg style="left:1075px;top:661px" width="15" height="10" viewBox="0 0 15 10"><path d="M0.3,9.4 C0.5,5.6 3.4,3.0 7.5,3.0 C11.6,3.0 14.5,5.6 14.7,9.4 Z" fill="#158a18"/><path d="M4.2,3.8 L3.0,1.7 M10.8,3.8 L12.0,1.7" stroke="#158a18" stroke-width="0.8" fill="none"/><circle cx="4.6" cy="6.7" r="0.65" fill="#d8f0d8"/><circle cx="10.4" cy="6.7" r="0.65" fill="#d8f0d8"/></svg>
<svg style="left:1392px;top:661px" width="13" height="13" viewBox="0 0 13 13" fill="none"><path d="M5.9,12.2 L5.9,2.4" stroke="#a3d6a5" stroke-width="1.7"/><path d="M0.9,6.3 L5.9,1.2 L10.9,6.3" stroke="#157c18" stroke-width="1.5"/></svg>
<span class="c" style="left:389.2px;top:659px;letter-spacing:0.17px">Galaxy A10</span>
<span class="c" style="left:563.0px;top:659px;letter-spacing:0.04px">SM-A105FN</span>
<span class="c" style="left:748.0px;top:659px;letter-spacing:0.12px">samsung</span>
<span class="c" style="left:1097.0px;top:659px;letter-spacing:0.02px">Android 11</span>
<span class="c" style="left:1236.0px;top:659px;letter-spacing:0.18px">1.8.16</span>
<span class="c" style="left:1409.8px;top:659px;letter-spacing:0.06px">05.10.2023 13:35</span>
<span class="c" style="left:1595.4px;top:659px;letter-spacing:0.04px">18.09.2023 10:29:28</span>
<svg style="left:1770px;top:433px" width="80" height="36" viewBox="1770 433 80 36">
<polygon points="1806.90,450.00 1799.70,463.09 1785.30,463.09 1778.10,450.00 1785.30,436.91 1799.70,436.91" fill="#dfe3fc"/>
<polygon points="1839.10,450.00 1831.90,463.09 1817.50,463.09 1810.30,450.00 1817.50,436.91 1831.90,436.91" fill="#dfe3fc"/>
<path d="M1785.0,450 C1787.2,445.6 1789.8,444.4 1792.2,444.4 C1794.6,444.4 1797.2,445.6 1799.4,450 C1797.2,454.4 1794.6,455.6 1792.2,455.6 C1789.8,455.6 1787.2,454.4 1785.0,450 Z" fill="#a2a6eb"/><circle cx="1792.3" cy="450" r="3.5" fill="#eef0fe"/><circle cx="1792.4" cy="450.1" r="2.4" fill="#2a2ecb"/><circle cx="1791.2" cy="448.8" r="1.15" fill="#eef0fe"/>
<g fill="none" stroke="#3b3fd0" stroke-width="1.25"><path d="M1819.2,446.2 L1830.4,446.2 M1822.6,446 L1822.6,444.3 L1827,444.3 L1827,446"/><path d="M1820.3,446.4 L1820.7,455.6 Q1820.8,456.5 1821.7,456.5 L1827.9,456.5 Q1828.8,456.5 1828.9,455.6 L1829.3,446.4" fill="#eceffe"/><path d="M1822.7,448.4 L1822.7,454.4 M1824.8,448.4 L1824.8,454.4 M1826.9,448.4 L1826.9,454.4" stroke-width="0.95"/></g>
</svg>
<svg style="left:1600px;top:430px" width="220" height="90" viewBox="1600 430 220 90"><defs><filter id="sh" x="-10%" y="-30%" width="120%" height="170%"><feGaussianBlur stdDeviation="2.0"/></filter></defs>
<path d="M1624.6,502.0 Q1623.8,501.2 1625.4,500.6 L1765.0,452.5 L1760.6,447.1 L1789.6,450.0 L1767.3,469.8 L1771.3,463.5 L1626.0,502.2 Z" fill="#1a1a2a" opacity="0.5" filter="url(#sh)" transform="translate(1.5,4)"/>
<path d="M1624.6,502.0 Q1623.8,501.2 1625.4,500.6 L1765.0,452.5 L1760.6,447.1 L1789.6,450.0 L1767.3,469.8 L1771.3,463.5 L1626.0,502.2 Z" fill="#90d63e"/>
</svg>
<div style="left:321px;top:683px;width:1578px;height:1px;background:#dcdee4"></div>
<svg style="left:338.8px;top:701.7px" width="8.6" height="8.6" viewBox="0 0 10 10" fill="#5c5c5c"><rect x="0.6" y="0.8" width="1.5" height="8.4"/><path d="M9,0.8 L9,9.2 L3,5 Z"/></svg>
<svg style="left:369.8px;top:701.7px" width="8.6" height="8.6" viewBox="0 0 10 10" fill="#5c5c5c"><path d="M7.6,0.8 L7.6,9.2 L1.6,5 Z"/></svg>
<div style="left:389px;top:691px;width:31px;height:31px;background:#cdd0f3;border-radius:1px"></div>
<span class="pt" style="left:401px;top:698px;color:#3a3cc4">1</span>
<svg style="left:430.6px;top:701.7px" width="8.6" height="8.6" viewBox="0 0 10 10" fill="#5c5c5c"><path d="M2.4,0.8 L2.4,9.2 L8.4,5 Z"/></svg>
<svg style="left:460.8px;top:701.7px" width="8.6" height="8.6" viewBox="0 0 10 10" fill="#5c5c5c"><path d="M1,0.8 L1,9.2 L7,5 Z"/><rect x="7.9" y="0.8" width="1.5" height="8.4"/></svg>
<span class="pt gs" style="left:495px;top:698px">Strona</span>
<div class="fi" style="left:540px;top:691px;width:65px"></div>
<span class="pt" style="left:552px;top:698px">1</span>
<span class="pt gs" style="left:612px;top:698px">z 1</span>
<div class="fi" style="left:642px;top:691px;width:65px"></div>
<div style="left:679px;top:691px;width:28px;height:31px;background:#e6eafc;border-radius:0 5px 5px 0"></div>
<span class="pt" style="left:653px;top:698px">20</span>
<svg style="left:688px;top:703px" width="10" height="7" viewBox="0 0 10 7"><path d="M0.9,0.5 L9.1,0.5 L5,6.3 Z" fill="#2a2ec9"/></svg>
<span class="pt gs" style="left:714px;top:698px">na stronę</span>
<span class="pt gs" style="left:1642px;top:698px;letter-spacing:0.18px;word-spacing:-0.5px">Wyświetlanie elementów 1 - 12 z 12</span>
<svg style="left:1870px;top:696px" width="18" height="20" viewBox="1870 696 18 20" fill="none" stroke="#1c1c1c" stroke-width="1.9"><path d="M1879.4,700.7 A6.1,6.1 0 1 0 1884.6,704.1"/><path d="M1879.0,697.7 L1883.9,700.7 L1879.0,703.7 Z" fill="#1c1c1c" stroke="none"/></svg>
</body>
</html>
